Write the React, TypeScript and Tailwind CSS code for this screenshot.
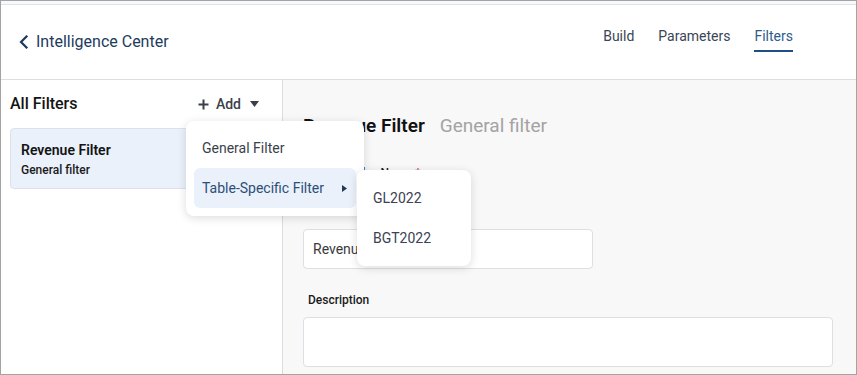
import React from 'react';

const tabs = ['Build', 'Parameters', 'Filters'];

const ChevronLeft = () => (
  <svg width="12" height="14" viewBox="0 0 12 14" fill="none">
    <path d="M9.5 1.5L4 7L9.5 12.5" stroke="#1d3a5c" strokeWidth="2.2" strokeLinecap="square" />
  </svg>
);

const Caret = ({ className = '' }: { className?: string }) => (
  <svg width="9" height="6" viewBox="0 0 9 6" className={className}>
    <path d="M0 0H9L4.5 6Z" fill="#3b3f4a" />
  </svg>
);

const App: React.FC = () => {
  return (
    <div className="relative w-[857px] h-[375px] border border-[#a3a3a3] flex flex-col overflow-hidden bg-white font-['Roboto',sans-serif]">
      <div className="h-[4px] shrink-0 bg-[#f8f9fa] border-b border-[#dde3e9]" />

      {/* header */}
      <header className="h-[75px] shrink-0 flex border-b border-[#dedede] bg-white">
        <div className="flex items-center pl-[16px] gap-[7px] flex-1">
          <ChevronLeft />
          <span className="text-[16px] text-[#1c3b5e] leading-5">Intelligence Center</span>
        </div>
        <nav className="flex gap-[24px] mt-[21px] self-start pr-[63px]">
          {tabs.map(t => (
            <span
              key={t}
              className={`text-[14px] leading-5 pb-[4px] border-b-2 ${
                t === 'Filters' ? 'text-[#2e5b8c] border-[#1f4e85]' : 'text-[#3a4556] border-transparent'
              }`}
            >
              {t}
            </span>
          ))}
        </nav>
      </header>

      <div className="flex flex-1 min-h-0">
        {/* sidebar */}
        <aside className="w-[282px] shrink-0 border-r border-[#dcdcdc] bg-white px-[9px]">
          <div className="h-[48px] flex items-center justify-between">
            <span className="text-[16px] font-medium text-[#141414]">All Filters</span>
            <button className="flex items-center mr-[14px] text-[#3b3f4a]">
              <svg width="11" height="11" viewBox="0 0 11 11" className="mr-[7px]">
                <path d="M5.5 0.5V10.5M0.5 5.5H10.5" stroke="#3b3f4a" strokeWidth="2" />
              </svg>
              <span className="text-[14px] font-medium">Add</span>
              <Caret className="ml-[9px]" />
            </button>
          </div>
          <div className="rounded-[4px] border border-[#dbe1ea] bg-[#eaf1fb] px-[10px] pt-[11px] pb-[10px]">
            <div className="text-[14px] leading-5 font-semibold text-[#141414]">Revenue Filter</div>
            <div className="text-[12px] leading-4 font-medium text-[#1a1a1a] mt-[2px]">General filter</div>
          </div>
        </aside>

        {/* main */}
        <main className="flex-1 bg-[#f8f8f8] pl-[20px] pr-[23px] pt-[32px]">
          <div className="flex items-baseline gap-[15px] leading-7">
            <span className="text-[19px] font-semibold text-[#111]">Revenue Filter</span>
            <span className="text-[19px] text-[#a3a3a3]">General filter</span>
          </div>
          <div className="mt-[25px] pl-[5px] text-[12px] leading-4 font-medium text-[#1a1a1a]">
            Filter Display Name <span className="text-[#c53030]">*</span>
          </div>
          <div className="mt-[48px] w-[290px] h-[40px] bg-white border border-[#dcdfe4] rounded-[4px] flex items-center pl-[9px] text-[14px] text-[#3a3a3a]">
            Revenue Filter
          </div>
          <div className="mt-[23px] pl-[5px] text-[12px] leading-4 font-medium text-[#1a1a1a]">Description</div>
          <div className="mt-[9px] h-[50px] bg-white border border-[#dcdfe4] rounded-[4px]" />
        </main>
      </div>

      {/* add menu */}
      <div className="absolute left-[185px] top-[120px] w-[178px] p-[8px] bg-white rounded-[8px] shadow-[0_2px_10px_rgba(0,0,0,0.14)]">
        <div className="h-[39px] flex items-center px-[8px] text-[14px] text-[#3b3f4a]">General Filter</div>
        <div className="h-[40px] flex items-center justify-between px-[8px] rounded-[6px] bg-[#eaf1fb] text-[14px] text-[#2c4f78]">
          <span>Table-Specific Filter</span>
          <svg width="5" height="7" viewBox="0 0 5 7" className="mr-[1px]">
            <path d="M0 0L5 3.5L0 7Z" fill="#23395a" />
          </svg>
        </div>
      </div>

      {/* submenu */}
      <div className="absolute left-[356px] top-[169px] w-[114px] p-[8px] bg-white rounded-[8px] shadow-[0_2px_10px_rgba(0,0,0,0.14)]">
        <div className="h-[40px] flex items-center px-[8px] text-[14px] text-[#3b4252]">GL2022</div>
        <div className="h-[40px] flex items-center px-[8px] text-[14px] text-[#3b4252]">BGT2022</div>
      </div>
    </div>
  );
};

export default App;
